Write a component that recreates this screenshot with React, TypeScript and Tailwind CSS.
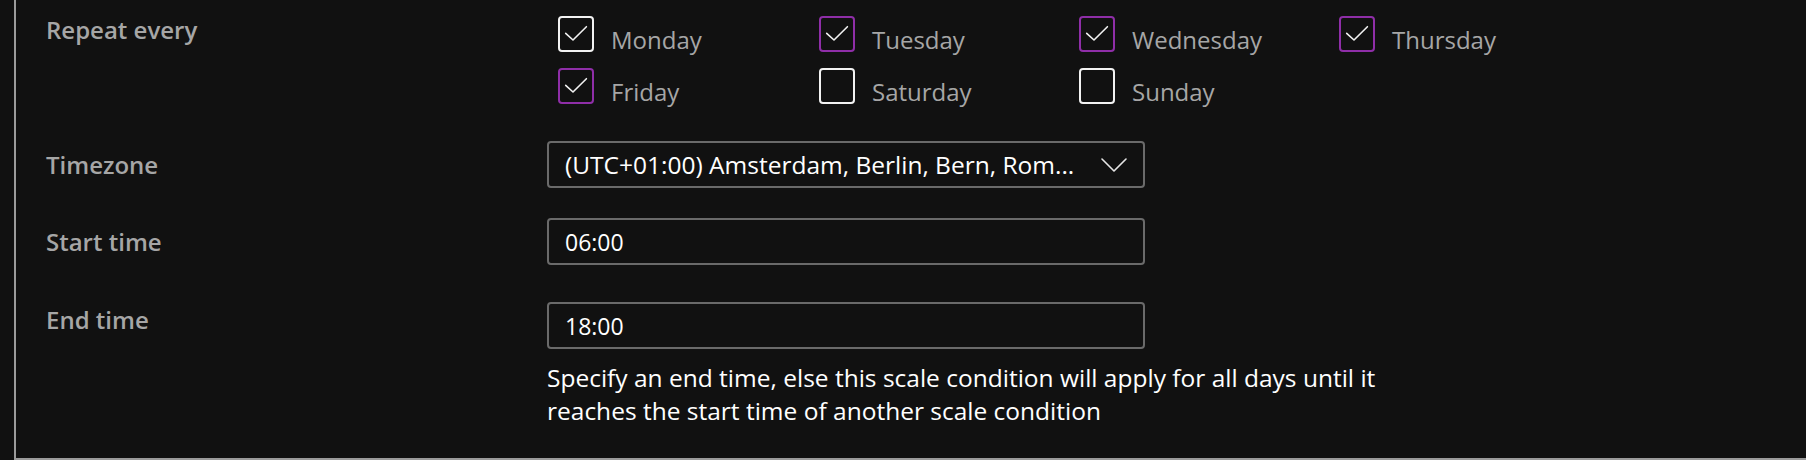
import React from 'react';

const days = [
  { name: 'Monday', checked: true, focused: true },
  { name: 'Tuesday', checked: true },
  { name: 'Wednesday', checked: true },
  { name: 'Thursday', checked: true },
  { name: 'Friday', checked: true },
  { name: 'Saturday', checked: false },
  { name: 'Sunday', checked: false },
];

const DayCheckbox = ({ name, checked, focused }: { name: string; checked: boolean; focused?: boolean }) => (
  <div className="flex h-[52px] items-start gap-[17px]">
    <span
      className={`flex h-[36px] w-[36px] shrink-0 items-center justify-center rounded-[4px] border-2 ${
        checked && !focused ? 'border-[#8f2ea8]' : 'border-[#f2f2f2]'
      }`}
    >
      {checked && (
        <svg width="32" height="32" viewBox="0 0 32 32" fill="none">
          <path d="M5.7 15.3 L13 22 L26.4 8.7" stroke="#f2f2f2" strokeWidth="1.6" strokeLinecap="round" strokeLinejoin="round" />
        </svg>
      )}
    </span>
    <span className="pt-[8px] text-[24px] leading-[32px] text-[#a6a6a6]">{name}</span>
  </div>
);

const Label = ({ children, className = '' }: { children: React.ReactNode; className?: string }) => (
  <div className={`w-[501px] shrink-0 text-[24px] font-semibold leading-[32px] text-[#a6a6a6] ${className}`}>{children}</div>
);

export default function App() {
  return (
    <div className="min-h-screen bg-[#111111]" style={{ fontFamily: '"Open Sans", "Noto Sans", sans-serif' }}>
      <div className="ml-[14px] h-[460px] border-b-2 border-l-2 border-[#9b9b9b] pl-[30px] pt-[14px]">
        {/* Repeat every */}
        <div className="flex">
          <Label>Repeat every</Label>
          <div className="ml-[11px] mt-[2px] grid grid-cols-[261px_260px_260px_260px]">
            {days.map((d) => (
              <DayCheckbox key={d.name} name={d.name} checked={d.checked} focused={d.focused} />
            ))}
          </div>
        </div>

        {/* Timezone */}
        <div className="mt-[21px] flex items-center">
          <Label>Timezone</Label>
          <div className="flex h-[47px] w-[598px] items-center justify-between rounded-[4px] border-2 border-[#6a6a6a] pl-[16px] pr-[16px]">
            <span className="truncate text-[24.5px] leading-[32px] text-white">(UTC+01:00) Amsterdam, Berlin, Bern, Rom...</span>
            <svg width="26" height="14" viewBox="0 0 26 14" fill="none" className="shrink-0">
              <path d="M1 1 L13 13 L25 1" stroke="#e6e6e6" strokeWidth="1.6" strokeLinecap="round" strokeLinejoin="round" />
            </svg>
          </div>
        </div>

        {/* Start time */}
        <div className="mt-[30px] flex items-center">
          <Label>Start time</Label>
          <div className="flex h-[47px] w-[598px] items-center rounded-[4px] border-2 border-[#6a6a6a] pl-[16px]">
            <span className="text-[23px] leading-[32px] text-white">06:00</span>
          </div>
        </div>

        {/* End time */}
        <div className="mt-[37px] flex items-start">
          <Label className="pt-[2px]">End time</Label>
          <div>
            <div className="flex h-[47px] w-[598px] items-center rounded-[4px] border-2 border-[#6a6a6a] pl-[16px]">
              <span className="text-[23px] leading-[32px] text-white">18:00</span>
            </div>
            <p className="mt-[12px] w-[860px] text-[24.5px] leading-[33px] text-white">
              Specify an end time, else this scale condition will apply for all days until it reaches the start time of another scale condition
            </p>
          </div>
        </div>
      </div>
    </div>
  );
}
